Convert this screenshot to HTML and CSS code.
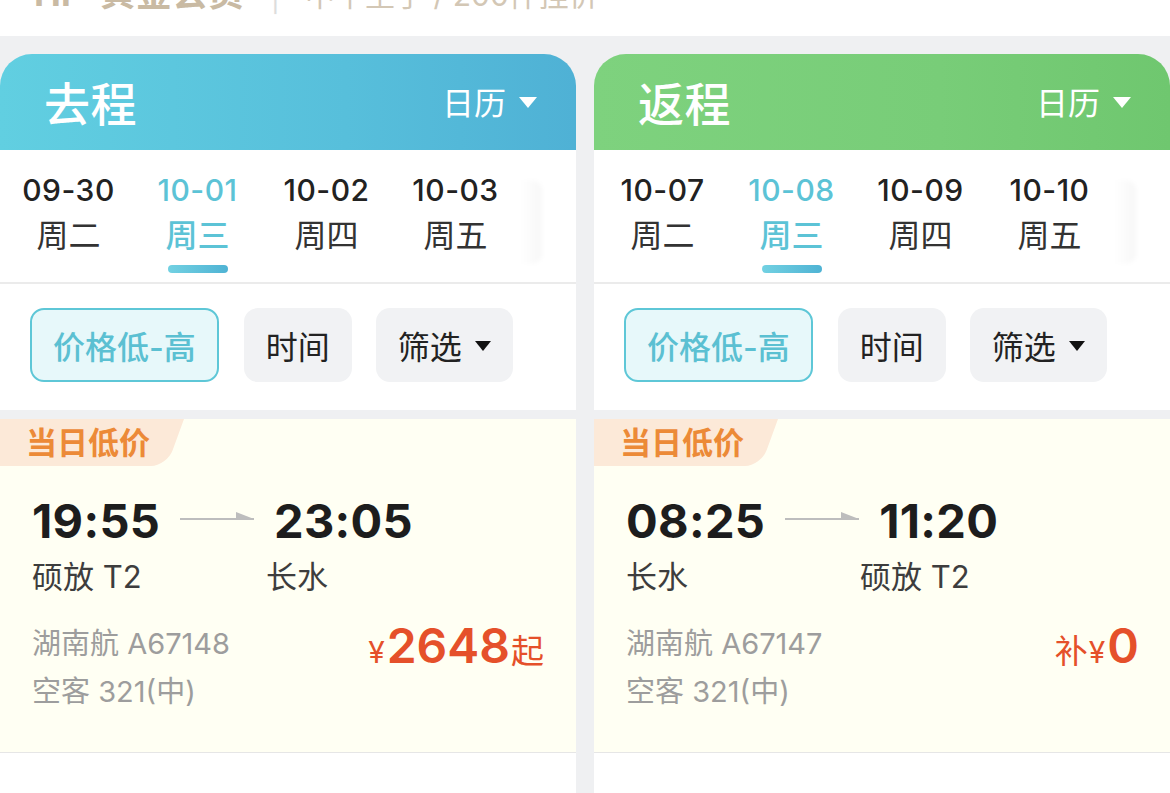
FILE: index.html
```html
<!DOCTYPE html>
<html lang="zh-CN">
<head>
<meta charset="utf-8">
<title>航班选择</title>
<link rel="stylesheet" href="styles.css">
</head>
<body>
<div class="topbar">
  <div class="topbar-text"><span class="brand">Hi · 黄金会员</span><span class="sep">|</span><span class="sub">中午至手 / 200件挂价</span></div>
</div>
<div class="columns">
  <section class="panel">
    <header class="panel-head go">
      <span class="title">去程</span>
      <span class="cal">日历<i class="tri"></i></span>
    </header>
    <div class="dates">
      <div class="day"><span class="d">09-30</span><span class="w">周二</span><span class="bar"></span></div>
      <div class="day active"><span class="d">10-01</span><span class="w">周三</span><span class="bar"></span></div>
      <div class="day"><span class="d">10-02</span><span class="w">周四</span><span class="bar"></span></div>
      <div class="day"><span class="d">10-03</span><span class="w">周五</span><span class="bar"></span></div>
    </div>
    <div class="sorts">
      <span class="chip on">价格低-高</span>
      <span class="chip">时间</span>
      <span class="chip">筛选<i class="tri dark"></i></span>
    </div>
    <article class="flight">
      <div class="badge">当日低价</div>
      <div class="times">
        <span class="t">19:55</span>
        <span class="arrow"></span>
        <span class="t">23:05</span>
      </div>
      <div class="stations">
        <span class="dep">硕放 T2</span>
        <span class="arr">长水</span>
      </div>
      <div class="info">
        <div class="meta">
          <div>湖南航 A67148</div>
          <div>空客 321(中)</div>
        </div>
        <div class="price"><span class="yen">¥</span><span class="num">2648</span><span class="qi">起</span></div>
      </div>
    </article>
    <div class="rest"></div>
  </section>

  <section class="panel">
    <header class="panel-head back">
      <span class="title">返程</span>
      <span class="cal">日历<i class="tri"></i></span>
    </header>
    <div class="dates">
      <div class="day"><span class="d">10-07</span><span class="w">周二</span><span class="bar"></span></div>
      <div class="day active"><span class="d">10-08</span><span class="w">周三</span><span class="bar"></span></div>
      <div class="day"><span class="d">10-09</span><span class="w">周四</span><span class="bar"></span></div>
      <div class="day"><span class="d">10-10</span><span class="w">周五</span><span class="bar"></span></div>
    </div>
    <div class="sorts">
      <span class="chip on">价格低-高</span>
      <span class="chip">时间</span>
      <span class="chip">筛选<i class="tri dark"></i></span>
    </div>
    <article class="flight">
      <div class="badge">当日低价</div>
      <div class="times">
        <span class="t">08:25</span>
        <span class="arrow"></span>
        <span class="t">11:20</span>
      </div>
      <div class="stations">
        <span class="dep">长水</span>
        <span class="arr">硕放 T2</span>
      </div>
      <div class="info">
        <div class="meta">
          <div>湖南航 A67147</div>
          <div>空客 321(中)</div>
        </div>
        <div class="price"><span class="qi">补</span><span class="yen">¥</span><span class="num">0</span></div>
      </div>
    </article>
    <div class="rest"></div>
  </section>
</div>
</body>
</html>
```

FILE: styles.css
```css
* { box-sizing: border-box; margin: 0; padding: 0; }
html, body { height: 100%; }
body {
  background: #eff0f2;
  font-family: Inter, "Noto Sans CJK SC", sans-serif;
  color: #222;
  width: 1170px;
  overflow: hidden;
}
.topbar {
  height: 36px;
  background: #fff;
  overflow: hidden;
}
.topbar-text {
  margin-top: -27px;
  padding-left: 34px;
  font-size: 36px;
  line-height: 40px;
  white-space: nowrap;
  color: #c9baa3;
  display: flex;
  align-items: baseline;
}
.brand { font-weight: 700; }
.sep { margin: 0 24px 0 26px; color: #ddd; font-weight: 300; }
.sub { font-size: 30px; color: #d3c7b5; }

.columns {
  display: grid;
  grid-template-columns: 576px 576px;
  column-gap: 18px;
  padding-top: 18px;
  height: calc(100% - 36px);
}
.panel {
  display: flex;
  flex-direction: column;
}
.panel-head {
  height: 96px;
  border-radius: 32px 32px 0 0;
  display: flex;
  align-items: center;
  justify-content: space-between;
  padding: 0 39px 2px 44px;
  color: #fff;
}
.panel-head.go { background: linear-gradient(90deg, #61cfe1 0%, #57bfdb 60%, #4fb1d5 100%); }
.panel-head.back { background: linear-gradient(90deg, #7ed27e 0%, #78cd78 60%, #6fc76f 100%); }
.title { font-size: 46px; font-weight: 500; letter-spacing: 0.5px; }
.cal { font-size: 32px; display: flex; align-items: center; }
.tri {
  display: inline-block;
  width: 0; height: 0;
  border-left: 9px solid transparent;
  border-right: 9px solid transparent;
  border-top: 11px solid #fff;
  margin-left: 13px;
  margin-top: 2px;
}
.tri.dark { border-top-color: #111; border-left-width: 8px; border-right-width: 8px; border-top-width: 10px; margin-left: 13px; }

.dates {
  position: relative;
  height: 134px;
  background: #fff;
  border-bottom: 2px solid #ebebeb;
  display: flex;
  padding: 22px 0 0 4px;
}
.dates::after {
  content: "";
  position: absolute;
  right: 34px;
  top: 30px;
  width: 22px;
  height: 84px;
  background: linear-gradient(90deg, rgba(0,0,0,0) 0%, rgba(0,0,0,0.03) 100%);
  border-radius: 0 10px 10px 0;
  filter: blur(2px);
}
.day {
  width: 129px;
  display: flex;
  flex-direction: column;
  align-items: center;
}
.day .d { font-size: 30px; line-height: 36px; font-weight: 500; color: #222; letter-spacing: 0.5px; }
.day .w { font-size: 32px; line-height: 40px; margin-top: 8px; color: #333; }
.day .bar { width: 60px; height: 8px; margin-top: 9px; border-radius: 4px; }
.day.active .d { color: #5cc3d6; }
.day.active .w { color: #5cc3d6; font-weight: 500; }
.day.active .bar { background: linear-gradient(90deg, #72d1e2, #4fb3d4); }

.sorts {
  background: #fff;
  display: flex;
  gap: 24px;
  padding: 24px 0 0 30px;
  border-bottom: 9px solid #eff0f2;
  height: 135px;
}
.chip {
  height: 74px;
  padding: 0 22px;
  border-radius: 14px;
  background: #f1f2f4;
  font-size: 32px;
  display: flex;
  align-items: center;
  color: #222;
}
.chip.on {
  background: #e7f8fa;
  border: 2px solid #5ec7d7;
  color: #5bc0d2;
  font-weight: 500;
  padding: 0 21px;
  margin-right: 1px;
}

.flight {
  background: #fffff3;
  border-bottom: 1px solid #e6e6e6;
  padding: 0 31px 36px 32px;
  overflow: hidden;
}
.badge {
  position: relative;
  display: inline-block;
  height: 47px;
  line-height: 47px;
  margin-left: -32px;
  padding: 0 34px 0 26px;
  font-size: 31px;
  font-weight: 700;
  color: #ec8a37;
  z-index: 0;
}
.badge::before {
  content: "";
  position: absolute;
  left: -20px; top: 0; right: 0; bottom: 0;
  background: #fce9d8;
  border-bottom-right-radius: 16px;
  transform: skewX(-20deg);
  transform-origin: top left;
  z-index: -1;
}
.times {
  display: flex;
  align-items: center;
  gap: 20px;
  margin-top: 26px;
  height: 56px;
}
.t { font-size: 47px; font-weight: 700; color: #1d1d1d; letter-spacing: 0.3px; }
.arrow {
  position: relative;
  width: 74px;
  height: 2px;
  background: #bdbdbd;
  margin-top: -2px;
}
.arrow::after {
  content: "";
  position: absolute;
  right: 0;
  bottom: 1px;
  border-left: 18px solid #bdbdbd;
  border-top: 7px solid transparent;
}
.stations {
  display: flex;
  margin-top: 9px;
  font-size: 31px;
  line-height: 40px;
  color: #3d3d3d;
}
.stations .dep { width: 234px; }
.info {
  display: flex;
  justify-content: space-between;
  margin-top: 23px;
}
.meta { font-size: 29px; line-height: 48px; color: #9d9d9d; }
.price {
  color: #e5502a;
  display: flex;
  align-items: baseline;
  height: 48px;
  line-height: 48px;
  margin-top: 2px;
}
.price .yen { font-size: 30px; margin-right: 2px; }
.price .num { font-size: 48px; font-weight: 600; }
.price .qi { font-size: 33px; margin: 0 1px; }
.rest { flex: 1; background: #fff; }
```
